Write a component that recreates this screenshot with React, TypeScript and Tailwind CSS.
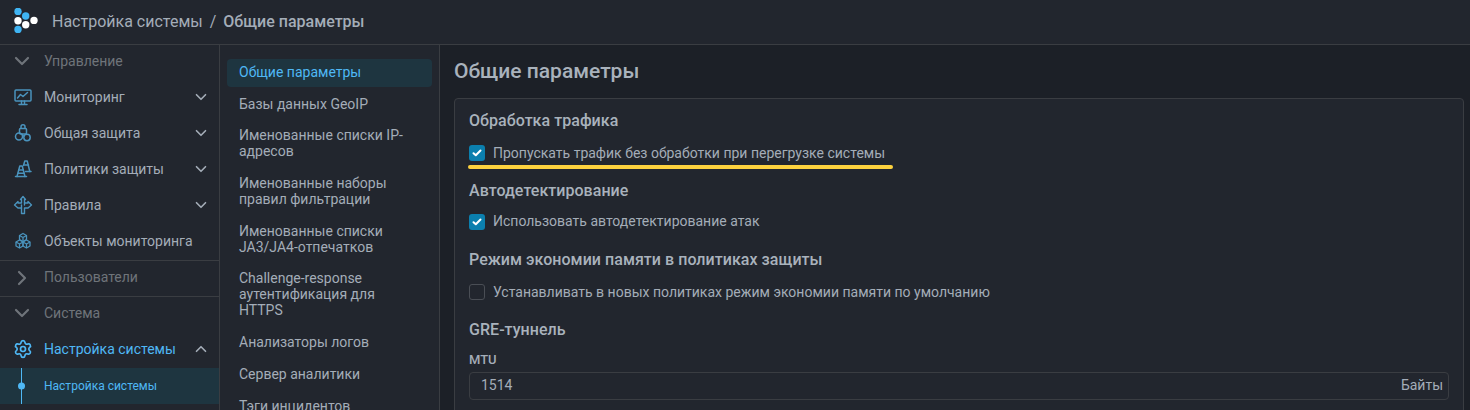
import React from "react";
import {ChevronDown, ChevronRight, ChevronUp, Settings} from "lucide-react";

function LogoIcon() {
    return (
        <svg width="28" height="28" viewBox="0 0 28 28" className="shrink-0">
            <circle cx="4" cy="3.4" r="3.7" fill="#3fb4f3"/>
            <circle cx="11.7" cy="8" r="3.7" fill="#3fb4f3"/>
            <circle cx="4" cy="12.8" r="3.7" fill="#ffffff"/>
            <circle cx="11.7" cy="16.8" r="3.7" fill="#ffffff"/>
            <circle cx="20" cy="12.4" r="3.7" fill="#ffffff"/>
            <circle cx="4" cy="21.4" r="3.7" fill="#3fb4f3"/>
        </svg>
    );
}

function MonitorIcon() {
    return (
        <svg width="20" height="20" viewBox="0 0 20 20" fill="none" stroke="currentColor" strokeWidth="1.5" strokeLinejoin="round" strokeLinecap="round">
            <rect x="2" y="3" width="16" height="11" rx="1"/>
            <path d="M4.5 11l3-3.5 2.5 2 4.5-4"/>
            <path d="M8.5 14v3M11.5 14v3M6 17.5h8"/>
        </svg>
    );
}

function ShieldIcon() {
    return (
        <svg width="20" height="20" viewBox="0 0 20 20" fill="none" stroke="currentColor" strokeWidth="1.5" strokeLinejoin="round">
            <path d="M8 5.5V3.8a2 2 0 0 1 4 0v1.7"/>
            <rect x="6.5" y="5.5" width="7" height="5.5" rx="1"/>
            <circle cx="6" cy="13.5" r="3.5"/>
            <circle cx="14" cy="14.5" r="3.2"/>
            <path d="M9 11l1.5 2.5"/>
        </svg>
    );
}

function ConesIcon() {
    return (
        <svg width="20" height="20" viewBox="0 0 20 20" fill="none" stroke="currentColor" strokeWidth="1.5" strokeLinejoin="round" strokeLinecap="round">
            <path d="M2.5 17.5h11"/>
            <path d="M4 17.5L6.8 7h2.4l2.8 10.5"/>
            <path d="M5.8 11h4.4M5 14.2h6"/>
            <path d="M10.5 6.5L11.8 2h2.4l2.6 10.5"/>
            <path d="M11.5 6h4M12.5 12.5h5.5"/>
        </svg>
    );
}

function RulesIcon() {
    return (
        <svg width="20" height="20" viewBox="0 0 20 20" fill="none" stroke="currentColor" strokeWidth="1.4" strokeLinejoin="round" strokeLinecap="round">
            <path d="M10 1.5L7.5 4.5h1v3.5H5V6.5L1.5 10 5 13h3.5v5.5h3V13H15l3.5-3L15 6.5V8h-3.5V4.5h1z"/>
            <path d="M11.5 8v2M8.5 10v3"/>
        </svg>
    );
}

function ObjectsIcon() {
    return (
        <svg width="20" height="20" viewBox="0 0 20 20" fill="none" stroke="currentColor" strokeWidth="1.3" strokeLinejoin="round">
            <path d="M10 2.5l3.5 2v4L10 10.5l-3.5-2v-4z"/>
            <path d="M6.5 9l3.5 2v4l-3.5 2L3 15v-4z"/>
            <path d="M13.5 9l3.5 2v4l-3.5 2L10 15v-4z"/>
            <path d="M6.5 4.5L10 6.5l3.5-2M10 6.5v4M3 11l3.5 2L10 11M6.5 13v4M10 11l3.5 2 3.5-2M13.5 13v4"/>
        </svg>
    );
}

const navItems = [
    {name: "Мониторинг", icon: <MonitorIcon/>, arrow: true},
    {name: "Общая защита", icon: <ShieldIcon/>, arrow: true},
    {name: "Политики защиты", icon: <ConesIcon/>, arrow: true},
    {name: "Правила", icon: <RulesIcon/>, arrow: true},
    {name: "Объекты мониторинга", icon: <ObjectsIcon/>, arrow: false},
];

const subItems = [
    "Базы данных GeoIP",
    "Именованные списки IP-адресов",
    "Именованные наборы правил фильтрации",
    "Именованные списки JA3/JA4-отпечатков",
    "Challenge-response аутентификация для HTTPS",
    "Анализаторы логов",
    "Сервер аналитики",
    "Тэги инцидентов",
];

function GroupRow({title, open, className}: { title: string; open: boolean; className: string }) {
    return (
        <div className={`flex shrink-0 items-center text-[14px] text-[#6f747a] ${className}`}>
            <div className="flex w-[44px] justify-center pr-[1px]">
                {open ? <ChevronDown size={24} strokeWidth={2.2}/> : <ChevronRight size={24} strokeWidth={2.2}/>}
            </div>
            <span>{title}</span>
        </div>
    );
}

function Check({checked}: { checked: boolean }) {
    if (!checked) {
        return <span className="h-4 w-4 shrink-0 rounded-[3px] border border-[#4a4e55]"/>;
    }
    return (
        <span className="flex h-4 w-4 shrink-0 items-center justify-center rounded-[3px] bg-[#0b7fae]">
            <svg width="10" height="8" viewBox="0 0 10 8" fill="none" stroke="#ffffff" strokeWidth="2" strokeLinecap="round" strokeLinejoin="round">
                <path d="M1.5 4.2L3.8 6.3 8.5 1.5"/>
            </svg>
        </span>
    );
}

function SectionTitle({children, className}: { children: React.ReactNode; className: string }) {
    return <h3 className={`text-[16px] leading-5 font-medium tracking-[0.04px] text-[#a9b2bc] ${className}`}>{children}</h3>;
}

export default function App() {
    return (
        <div className="flex h-[410px] w-[1470px] flex-col overflow-hidden bg-[#1c2027] font-['Roboto',sans-serif] text-[14px] text-[#a4adb8]">
            <header className="flex h-[45px] shrink-0 items-center border-b border-[#3a3d42] bg-[#22262e] pl-[14px]">
                <LogoIcon/>
                <div className="ml-[10px] flex items-center text-[16px] text-[#a4adb8]">
                    <span>Настройка системы</span>
                    <span className="mx-[7px]">/</span>
                    <span className="font-medium">Общие параметры</span>
                </div>
            </header>
            <div className="flex min-h-0 flex-1">
                <aside className="flex w-[220px] shrink-0 flex-col overflow-hidden border-r border-[#3a3d42] bg-[#22262e]">
                    <div className="-mt-[2px]">
                        <GroupRow title="Управление" open={true} className="h-9"/>
                        {navItems.map((item) => (
                            <div key={item.name} className="flex h-9 items-center pl-[13px] pr-[9px]">
                                <span className="w-[31px] text-[#4a93bd]">{item.icon}</span>
                                <span className="flex-1">{item.name}</span>
                                {item.arrow && <ChevronDown size={18} strokeWidth={2.2}/>}
                            </div>
                        ))}
                        <div className="mt-px h-[37px] border-y border-[#3a3d42]">
                            <GroupRow title="Пользователи" open={false} className="h-full pb-[2px]"/>
                        </div>
                        <GroupRow title="Система" open={true} className="h-[34px] pb-[2px]"/>
                        <div className="flex h-[37px] items-center pb-px pl-[13px] pr-[9px] text-[#4fb8f5]">
                            <span className="w-[31px]"><Settings size={20}/></span>
                            <span className="flex-1">Настройка системы</span>
                            <ChevronUp size={18} strokeWidth={2.2} className="text-[#a4adb8]"/>
                        </div>
                        <div className="relative flex h-9 items-center bg-[#1e3540] pl-[44px] text-[12px] text-[#4fb8f5]">
                            <span className="absolute top-0 bottom-0 left-[21px] w-px bg-[#4fb8f5]"/>
                            <span className="absolute top-1/2 left-[18px] h-[7px] w-[7px] -translate-y-1/2 rounded-full bg-[#4fb8f5]"/>
                            Настройка системы
                        </div>
                    </div>
                </aside>
                <nav className="flex w-[220px] shrink-0 flex-col gap-[3.7px] overflow-hidden border-r border-[#3a3d42] bg-[#22262e] pt-[14px] pl-[7px] pr-[7px]">
                    <div className="rounded-[4px] bg-[#1e3540] px-3 pt-[5px] pb-[7px] leading-4 text-[#4fb8f5]">Общие параметры</div>
                    {subItems.map((item) => (
                        <div key={item} className="shrink-0 px-3 pt-[5px] pb-[7px] leading-4">{item}</div>
                    ))}
                </nav>
                <main className="min-w-0 flex-1 overflow-hidden pt-[14px] pl-[14px] pr-[6px]">
                    <h2 className="text-[21px] leading-6 font-medium text-[#a9b2bc]">Общие параметры</h2>
                    <section className="mt-[15px] rounded-[4px] border border-[#3a3d42] bg-[#22262e] px-[14px] pt-[12px] pb-4">
                        <SectionTitle className="">Обработка трафика</SectionTitle>
                        <label className="relative mt-[14px] flex h-4 items-center gap-2">
                            <Check checked={true}/>
                            <span>Пропускать трафик без обработки при перегрузке системы</span>
                            <span className="absolute top-[20px] -left-[1px] h-[4px] w-[425px] rounded-full bg-[#fdd23e]"/>
                        </label>
                        <SectionTitle className="mt-[20px]">Автодетектирование</SectionTitle>
                        <label className="mt-[13px] flex h-4 items-center gap-2">
                            <Check checked={true}/>
                            <span className="pb-[2px]">Использовать автодетектирование атак</span>
                        </label>
                        <SectionTitle className="mt-[20px]">Режим экономии памяти в политиках защиты</SectionTitle>
                        <label className="mt-[14px] flex h-4 items-center gap-2">
                            <Check checked={false}/>
                            <span>Устанавливать в новых политиках режим экономии памяти по умолчанию</span>
                        </label>
                        <SectionTitle className="mt-[20px]">GRE-туннель</SectionTitle>
                        <div className="mt-[12px] text-[13px] leading-4 font-medium">MTU</div>
                        <div className="mt-[4px] flex h-[28px] items-center justify-between rounded-[4px] border border-[#3a3d42] px-[11px] pr-[5px] pb-[2px]">
                            <span>1514</span>
                            <span>Байты</span>
                        </div>
                    </section>
                </main>
            </div>
        </div>
    );
}
